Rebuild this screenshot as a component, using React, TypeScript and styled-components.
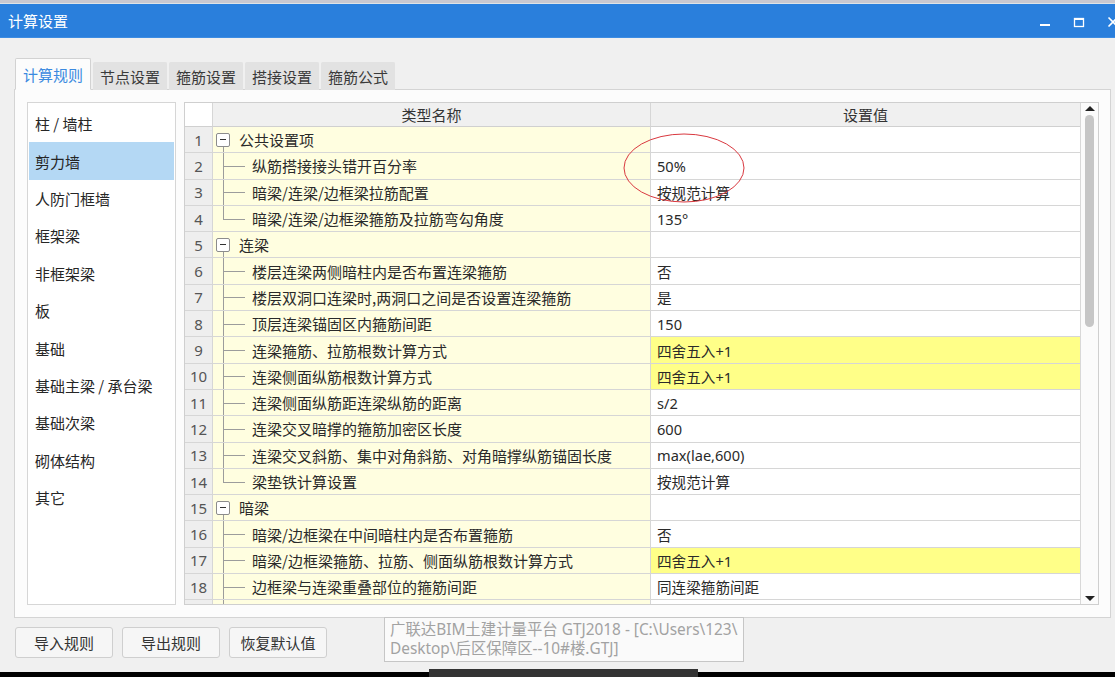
import * as React from 'react';
import styled, { createGlobalStyle } from 'styled-components';

const GlobalStyle = createGlobalStyle`
  html, body {
    margin: 0;
    padding: 0;
    background: #f0f0f0;
  }
  body {
    font-family: 'Noto Sans', 'Noto Sans CJK SC', sans-serif;
    color: #2b2b2b;
  }
`;

type Kind = 'group' | 'child' | 'last';

interface Row {
  no?: number;
  kind: Kind;
  name: string;
  value?: string;
  marked?: boolean;
}

const rows: Row[] = [
  { no: 1, kind: 'group', name: '公共设置项' },
  { no: 2, kind: 'child', name: '纵筋搭接接头错开百分率', value: '50%' },
  { no: 3, kind: 'child', name: '暗梁/连梁/边框梁拉筋配置', value: '按规范计算' },
  { no: 4, kind: 'last', name: '暗梁/连梁/边框梁箍筋及拉筋弯勾角度', value: '135°' },
  { no: 5, kind: 'group', name: '连梁' },
  { no: 6, kind: 'child', name: '楼层连梁两侧暗柱内是否布置连梁箍筋', value: '否' },
  { no: 7, kind: 'child', name: '楼层双洞口连梁时,两洞口之间是否设置连梁箍筋', value: '是' },
  { no: 8, kind: 'child', name: '顶层连梁锚固区内箍筋间距', value: '150' },
  { no: 9, kind: 'child', name: '连梁箍筋、拉筋根数计算方式', value: '四舍五入+1', marked: true },
  { no: 10, kind: 'child', name: '连梁侧面纵筋根数计算方式', value: '四舍五入+1', marked: true },
  { no: 11, kind: 'child', name: '连梁侧面纵筋距连梁纵筋的距离', value: 's/2' },
  { no: 12, kind: 'child', name: '连梁交叉暗撑的箍筋加密区长度', value: '600' },
  { no: 13, kind: 'child', name: '连梁交叉斜筋、集中对角斜筋、对角暗撑纵筋锚固长度', value: 'max(lae,600)' },
  { no: 14, kind: 'last', name: '梁垫铁计算设置', value: '按规范计算' },
  { no: 15, kind: 'group', name: '暗梁' },
  { no: 16, kind: 'child', name: '暗梁/边框梁在中间暗柱内是否布置箍筋', value: '否' },
  { no: 17, kind: 'child', name: '暗梁/边框梁箍筋、拉筋、侧面纵筋根数计算方式', value: '四舍五入+1', marked: true },
  { no: 18, kind: 'child', name: '边框梁与连梁重叠部位的箍筋间距', value: '同连梁箍筋间距' },
  // only a sliver of the next row is visible at the bottom edge
  { kind: 'child', name: '', value: '' },
];

const categories = [
  '柱 / 墙柱',
  '剪力墙',
  '人防门框墙',
  '框架梁',
  '非框架梁',
  '板',
  '基础',
  '基础主梁 / 承台梁',
  '基础次梁',
  '砌体结构',
  '其它',
];

const tabs = ['计算规则', '节点设置', '箍筋设置', '搭接设置', '箍筋公式'];

const Root = styled.div`
  position: relative;
  width: 1115px;
  height: 677px;
  overflow: hidden;
  display: flex;
  flex-direction: column;
  background: #f0f0f0;
`;

const TopStrip = styled.div`
  height: 4px;
  background: #c9c8d0;
  border-bottom: 1px solid #dfe3e6;
  box-sizing: border-box;
`;

const TitleBar = styled.div`
  height: 34px;
  background: #2a7fdc;
  border-bottom: 1px solid #3d8ce2;
  box-sizing: border-box;
  display: flex;
  align-items: center;
  padding-left: 8px;
`;

const Title = styled.span`
  color: #ffffff;
  font-size: 15px;
  font-family: 'Noto Sans CJK SC', sans-serif;
`;

const WinControls = styled.div`
  margin-left: auto;
  display: flex;
  align-items: center;
  gap: 22px;
  margin-right: -4px;
  padding-top: 2px;
`;

const Body = styled.div`
  padding: 20px 0 0 14px;
`;

const TabBar = styled.div`
  display: flex;
  align-items: flex-end;
  height: 32px;
  padding-left: 1px;
  gap: 2px;
  margin-bottom: -1px;
  position: relative;
  z-index: 1;
`;

const Tab = styled.div<{ $active?: boolean }>`
  box-sizing: border-box;
  width: ${p => (p.$active ? 76 : 74)}px;
  height: ${p => (p.$active ? 32 : 28)}px;
  display: flex;
  align-items: center;
  justify-content: center;
  font-size: 15px;
  font-family: 'Noto Sans CJK SC', sans-serif;
  color: ${p => (p.$active ? '#3b8ae0' : '#3a3a3a')};
  background: ${p => (p.$active ? '#fcfcfc' : '#e2e2e2')};
  border: 1px solid ${p => (p.$active ? '#d2d2d2' : '#e2e2e2')};
  border-bottom: ${p => (p.$active ? '1px solid #fcfcfc' : 'none')};
  border-radius: 2px 2px 0 0;
`;

const Panel = styled.div`
  box-sizing: border-box;
  width: 1097px;
  height: 529px;
  background: #fcfcfc;
  border: 1px solid #d4d4d4;
  padding: 12px 11px 12px 12px;
  display: flex;
  gap: 8px;
`;

const SideList = styled.div`
  box-sizing: border-box;
  width: 149px;
  background: #ffffff;
  border: 1px solid #d6d6d6;
  padding: 2px 1px;
  display: flex;
  flex-direction: column;
`;

const SideItem = styled.div<{ $selected?: boolean }>`
  height: 37.4px;
  flex: none;
  display: flex;
  align-items: center;
  padding-left: 6px;
  font-size: 15px;
  font-family: 'Noto Sans CJK SC', sans-serif;
  color: #262626;
  background: ${p => (p.$selected ? '#b4d8f4' : 'transparent')};
`;

const Grid = styled.div`
  box-sizing: border-box;
  width: 915px;
  height: 503px;
  border: 1px solid #cfcfcf;
  background: #ffffff;
  display: flex;
`;

const GridMain = styled.div`
  width: 895px;
  display: flex;
  flex-direction: column;
`;

const Cols = styled.div`
  display: grid;
  grid-template-columns: 28px 438px 429px;
`;

const HeaderRow = styled(Cols)`
  height: 24px;
  flex: none;
`;

const HeadCell = styled.div<{ $corner?: boolean }>`
  box-sizing: border-box;
  display: flex;
  align-items: center;
  justify-content: center;
  font-size: 15px;
  font-family: 'Noto Sans CJK SC', sans-serif;
  color: #333333;
  background: ${p => (p.$corner ? '#ffffff' : '#f0f0f0')};
  border-right: 1px solid #d6d6d6;
  border-bottom: 1px solid #d0d0d0;
  &:last-child {
    border-right: none;
  }
`;

const RowsBody = styled.div`
  height: 477px;
  overflow: hidden;
`;

const DataRow = styled(Cols)`
  height: 26.3px;
`;

const NumCell = styled.div`
  box-sizing: border-box;
  display: flex;
  align-items: center;
  justify-content: center;
  background: #eeeeee;
  border-right: 1px solid #d6d6d6;
  border-bottom: 1px solid #d6d6d6;
  font-size: 15px;
  color: #555555;
`;

const NameCell = styled.div`
  box-sizing: border-box;
  display: flex;
  align-items: center;
  background: #fffee0;
  border-right: 1px solid #d6d6d6;
  border-bottom: 1px solid #d6d6d6;
  font-size: 15px;
  font-family: 'Noto Sans CJK SC', sans-serif;
  color: #2a2a2a;
  white-space: nowrap;
  overflow: hidden;
`;

const Tree = styled.span<{ $kind: Kind }>`
  position: relative;
  flex: none;
  align-self: stretch;
  width: ${p => (p.$kind === 'group' ? 26 : 39)}px;

  &::before {
    content: '';
    position: absolute;
    left: 10px;
    width: 0;
    border-left: 1px solid #9c9c9c;
    top: ${p => (p.$kind === 'group' ? 'calc(50% + 7px)' : '0')};
    bottom: ${p => (p.$kind === 'last' ? '50%' : '-1px')};
  }

  &::after {
    content: '';
    display: ${p => (p.$kind === 'group' ? 'none' : 'block')};
    position: absolute;
    left: 10px;
    top: 50%;
    width: 22px;
    border-top: 1px solid #9c9c9c;
  }
`;

const MinusBox = styled.span`
  position: absolute;
  left: 3px;
  top: calc(50% - 7px);
  box-sizing: border-box;
  width: 14px;
  height: 14px;
  border: 1px solid #8c8c8c;
  border-radius: 2px;
  background: #ffffff;

  &::after {
    content: '';
    position: absolute;
    left: 3px;
    right: 3px;
    top: 5px;
    height: 1.5px;
    background: #333333;
  }
`;

const ValueCell = styled.div<{ $marked?: boolean }>`
  box-sizing: border-box;
  display: flex;
  align-items: center;
  padding-left: 6px;
  background: ${p => (p.$marked ? '#ffff88' : '#ffffff')};
  border-bottom: 1px solid #d6d6d6;
  font-size: 14.6px;
  font-family: 'Noto Sans', 'Noto Sans CJK SC', sans-serif;
  color: #2a2a2a;
`;

const ScrollBar = styled.div`
  box-sizing: border-box;
  width: 18px;
  border-left: 1px solid #d8d8d8;
  background: #fbfbfb;
  display: flex;
  flex-direction: column;
  align-items: center;
  padding: 3px 0 3px;
`;

const Arrow = styled.span<{ $down?: boolean }>`
  width: 0;
  height: 0;
  border-left: 5px solid transparent;
  border-right: 5px solid transparent;
  ${p =>
    p.$down
      ? 'border-top: 5px solid #222; margin-top: auto;'
      : 'border-bottom: 5px solid #222;'}
`;

const Thumb = styled.span`
  margin-top: 4px;
  width: 9px;
  height: 212px;
  border-radius: 5px;
  background: #c6c6c6;
`;

const Footer = styled.div`
  display: flex;
  gap: 9px;
  padding: 9px 0 0 1px;
`;

const Button = styled.button`
  box-sizing: border-box;
  width: 98px;
  height: 31px;
  background: #f6f6f6;
  border: 1px solid #cfcfcf;
  border-radius: 3px;
  font-size: 15px;
  font-family: 'Noto Sans CJK SC', sans-serif;
  color: #333333;
  padding: 0;
`;

const Taskbar = styled.div`
  position: relative;
  margin-top: auto;
  height: 5px;
  background: #000000;
`;

const TaskItem = styled.span`
  position: absolute;
  left: 429px;
  top: -3px;
  width: 269px;
  height: 8px;
  background: #333333;
`;

const Tooltip = styled.div`
  position: absolute;
  left: 384px;
  top: 617px;
  box-sizing: border-box;
  width: 360px;
  height: 45px;
  background: #fafafa;
  border: 1px solid #c6c6c6;
  padding: 2px 5px;
  font-size: 15.4px;
  line-height: 19px;
  font-family: 'Noto Sans', 'Noto Sans CJK SC', sans-serif;
  color: #a2a2a2;
  white-space: nowrap;
`;

const Annotation = styled.svg`
  position: absolute;
  left: 622px;
  top: 132px;
  pointer-events: none;
`;

function WindowButtons() {
  return (
    <WinControls>
      <svg width="12" height="12" viewBox="0 0 12 12">
        <rect x="1" y="8" width="10" height="2" fill="#fff" />
      </svg>
      <svg width="12" height="12" viewBox="0 0 12 12">
        <rect x="1.5" y="2.5" width="9" height="8" fill="none" stroke="#fff" strokeWidth="1.3" />
        <rect x="1" y="2" width="10" height="2" fill="#fff" />
      </svg>
      <svg width="12" height="12" viewBox="0 0 12 12">
        <path d="M1.5 1.5 L10.5 10.5 M10.5 1.5 L1.5 10.5" stroke="#fff" strokeWidth="1.6" />
      </svg>
    </WinControls>
  );
}

export default function App() {
  return (
    <Root lang="zh-CN">
      <GlobalStyle />
      <TopStrip />
      <TitleBar>
        <Title>计算设置</Title>
        <WindowButtons />
      </TitleBar>
      <Body>
        <TabBar>
          {tabs.map((t, i) => (
            <Tab key={t} $active={i === 0}>
              {t}
            </Tab>
          ))}
        </TabBar>
        <Panel>
          <SideList>
            {categories.map((c, i) => (
              <SideItem key={c} $selected={i === 1}>
                {c}
              </SideItem>
            ))}
          </SideList>
          <Grid>
            <GridMain>
              <HeaderRow>
                <HeadCell $corner />
                <HeadCell>类型名称</HeadCell>
                <HeadCell>设置值</HeadCell>
              </HeaderRow>
              <RowsBody>
                {rows.map((r, i) => (
                  <DataRow key={i}>
                    <NumCell>{r.no}</NumCell>
                    <NameCell>
                      <Tree $kind={r.kind}>{r.kind === 'group' && <MinusBox />}</Tree>
                      {r.name}
                    </NameCell>
                    <ValueCell $marked={r.marked}>{r.value}</ValueCell>
                  </DataRow>
                ))}
              </RowsBody>
            </GridMain>
            <ScrollBar>
              <Arrow />
              <Thumb />
              <Arrow $down />
            </ScrollBar>
          </Grid>
        </Panel>
        <Footer>
          <Button>导入规则</Button>
          <Button>导出规则</Button>
          <Button>恢复默认值</Button>
        </Footer>
      </Body>
      <Taskbar>
        <TaskItem />
      </Taskbar>
      <Tooltip>
        <div>{'广联达BIM土建计量平台 GTJ2018 - [C:\\Users\\123\\'}</div>
        <div>{'Desktop\\后区保障区--10#楼.GTJ]'}</div>
      </Tooltip>
      <Annotation width="126" height="74" viewBox="0 0 126 74">
        <ellipse cx="62" cy="36" rx="60" ry="34" fill="none" stroke="#d9383f" strokeWidth="1" />
      </Annotation>
    </Root>
  );
}
